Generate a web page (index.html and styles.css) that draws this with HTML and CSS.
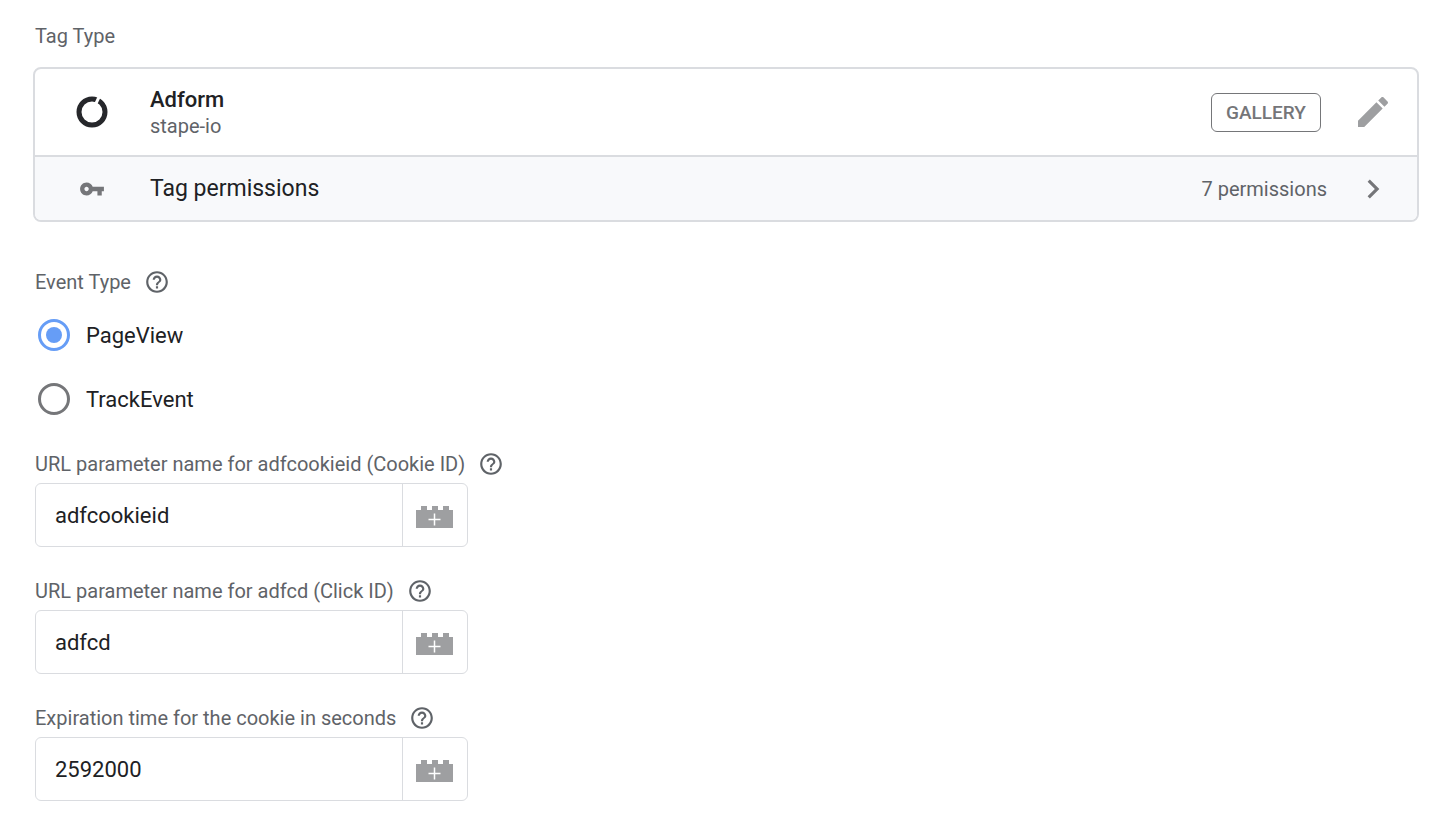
FILE: index.html
```html
<!DOCTYPE html>
<html lang="en">
<head>
    <meta charset="UTF-8">
    <meta name="viewport" content="width=device-width, initial-scale=1.0">
    <title>Tag Configuration</title>
    <link rel="stylesheet" href="styles.css">
</head>
<body>
    <!-- Shared icons -->
    <svg class="sprite" aria-hidden="true">
        <symbol id="icon-help" viewBox="0 0 24 24">
            <path d="M11 18h2v-2h-2v2zm1-16C6.48 2 2 6.48 2 12s4.480 10 10 10 10-4.480 10-10S17.520 2 12 2zm0 18c-4.410 0-8-3.590-8-8s3.590-8 8-8 8 3.590 8 8-3.590 8-8 8zm0-14c-2.210 0-4 1.790-4 4h2c0-1.100.9-2 2-2s2 .9 2 2c0 2-3 1.750-3 5h2c0-2.250 3-2.500 3-5 0-2.210-1.790-4-4-4z"/>
        </symbol>
        <symbol id="icon-brick" viewBox="0 0 37 22">
            <path fill="#9e9fa1" d="M0 4h5V0h6v4h5V0h6v4h5V0h6v4h4v18H0z"/>
            <path fill="none" stroke="#fff" stroke-width="1.5" d="M12.500 13.500h12M18.500 7.500v12"/>
        </symbol>
    </svg>

    <form class="tag-form">
        <h2 class="label">Tag Type</h2>

        <div class="card">
            <div class="card-row">
                <div class="card-icon">
                    <svg width="32" height="32" viewBox="0 0 32 32">
                        <circle cx="16" cy="16" r="13" fill="none" stroke="#26272b" stroke-width="5"/>
                        <path d="M19 9.500L23.500 0" stroke="#fff" stroke-width="3"/>
                    </svg>
                </div>
                <div class="card-text">
                    <div class="tag-name">Adform</div>
                    <div class="tag-owner">stape-io</div>
                </div>
                <button type="button" class="gallery">GALLERY</button>
                <button type="button" class="icon-button" aria-label="Edit">
                    <svg width="40" height="40" viewBox="0 0 24 24" fill="#9e9fa1">
                        <path d="M3 17.250V21h3.750L17.810 9.940l-3.750-3.750L3 17.250zM20.710 7.040c.39-.39.39-1.020 0-1.410l-2.340-2.340c-.39-.39-1.020-.39-1.410 0l-1.830 1.830 3.750 3.750 1.830-1.830z"/>
                    </svg>
                </button>
            </div>
            <div class="card-row permissions">
                <div class="card-icon">
                    <svg width="26" height="26" viewBox="0 0 24 24" fill="#757679">
                        <path d="M12.650 10C11.830 7.670 9.610 6 7 6c-3.310 0-6 2.690-6 6s2.690 6 6 6c2.610 0 4.830-1.670 5.650-4H17v4h4v-4h2v-4H12.650zM7 14c-1.100 0-2-.9-2-2s.9-2 2-2 2 .9 2 2-.9 2-2 2z"/>
                    </svg>
                </div>
                <div class="card-text permissions-title">Tag permissions</div>
                <div class="permissions-count">7 permissions</div>
                <button type="button" class="icon-button" aria-label="Show permissions">
                    <svg width="38" height="38" viewBox="0 0 24 24" fill="#757679">
                        <path d="M10 6L8.590 7.410 13.170 12l-4.580 4.590L10 18l6-6z"/>
                    </svg>
                </button>
            </div>
        </div>

        <fieldset class="event-type">
            <legend class="label">
                Event Type
                <svg class="help"><use href="#icon-help"/></svg>
            </legend>
            <label class="radio"><input type="radio" name="event" checked>PageView</label>
            <label class="radio"><input type="radio" name="event">TrackEvent</label>
        </fieldset>

        <div class="field">
            <label class="label" for="cookieId">
                URL parameter name for adfcookieid (Cookie ID)
                <svg class="help"><use href="#icon-help"/></svg>
            </label>
            <div class="input-group">
                <input type="text" id="cookieId" value="adfcookieid">
                <button type="button" aria-label="Insert variable"><svg class="brick"><use href="#icon-brick"/></svg></button>
            </div>
        </div>

        <div class="field">
            <label class="label" for="clickId">
                URL parameter name for adfcd (Click ID)
                <svg class="help"><use href="#icon-help"/></svg>
            </label>
            <div class="input-group">
                <input type="text" id="clickId" value="adfcd">
                <button type="button" aria-label="Insert variable"><svg class="brick"><use href="#icon-brick"/></svg></button>
            </div>
        </div>

        <div class="field">
            <label class="label" for="expiration">
                Expiration time for the cookie in seconds
                <svg class="help"><use href="#icon-help"/></svg>
            </label>
            <div class="input-group">
                <input type="text" id="expiration" value="2592000">
                <button type="button" aria-label="Insert variable"><svg class="brick"><use href="#icon-brick"/></svg></button>
            </div>
        </div>
    </form>
</body>
</html>
```
FILE: styles.css
```css
* {
    box-sizing: border-box;
}
body {
    margin: 0;
    background-color: #fff;
    color: #202124;
    font-family: Roboto, Arial, sans-serif;
    font-size: 22px;
}
input, button {
    font-family: inherit;
    color: inherit;
}
button {
    padding: 0;
    background: none;
    border: none;
    cursor: pointer;
}
svg {
    display: block;
    flex: none;
}
.sprite {
    display: none;
}
.tag-form {
    padding: 24px 33px;
}
.label {
    display: flex;
    align-items: center;
    gap: 13px;
    height: 24px;
    margin: 0;
    padding: 0 2px;
    color: #5f6368;
    font-size: 20px;
    font-weight: 400;
    line-height: 24px;
}
.help {
    width: 26px;
    height: 26px;
    fill: #5f6368;
}

/* Tag type card */
.card {
    margin-top: 19px;
    border: 2px solid #dadce0;
    border-radius: 8px;
    overflow: hidden;
}
.card-row {
    display: flex;
    align-items: center;
    height: 86px;
    padding-right: 24px;
}
.card-icon {
    display: flex;
    justify-content: center;
    width: 115px;
    padding-right: 1px;
}
.card-text {
    flex: 1;
}
.tag-name {
    font-weight: 500;
    line-height: 28px;
}
.tag-owner {
    color: #5f6368;
    font-size: 20px;
    line-height: 24px;
}
.gallery {
    width: 110px;
    height: 39px;
    margin-right: 32px;
    border: 1px solid #757679;
    border-radius: 6px;
    color: #757679;
    font-size: 19px;
    font-weight: 500;
}
.icon-button {
    display: flex;
    justify-content: center;
    width: 40px;
}
.permissions {
    height: 65px;
    border-top: 2px solid #dadce0;
    background-color: #f8f9fb;
}
.permissions-title {
    font-size: 23px;
}
.permissions-count {
    margin-right: 26px;
    color: #5f6368;
    font-size: 20px;
}

/* Event type */
.event-type {
    display: flex;
    flex-direction: column;
    gap: 32px;
    margin: 48px 0 0;
    padding: 25px 0 0;
    border: none;
}
.radio {
    display: flex;
    align-items: center;
    gap: 16px;
    height: 32px;
    padding-left: 5px;
}
.radio input {
    display: grid;
    place-content: center;
    appearance: none;
    width: 32px;
    height: 32px;
    margin: 0;
    border: 3px solid #757679;
    border-radius: 50%;
}
.radio input:checked {
    border-color: #669df6;
}
.radio input:checked::before {
    content: "";
    width: 16px;
    height: 16px;
    border-radius: 50%;
    background-color: #669df6;
}

/* Text fields */
.field {
    margin-top: 32px;
}
.event-type + .field {
    margin-top: 37px;
}
.input-group {
    display: flex;
    width: 433px;
    height: 64px;
    margin: 7px 2px 0;
    border: 1px solid #dadce0;
    border-radius: 6px;
}
.input-group input {
    flex: 1;
    min-width: 0;
    padding: 0 19px;
    border: none;
    background: none;
    outline: none;
    font-size: 22px;
}
.input-group button {
    display: flex;
    align-items: center;
    justify-content: center;
    width: 65px;
    padding: 3px 2px 0 0;
    border-left: 1px solid #dadce0;
}
.brick {
    width: 37px;
    height: 22px;
}
```
